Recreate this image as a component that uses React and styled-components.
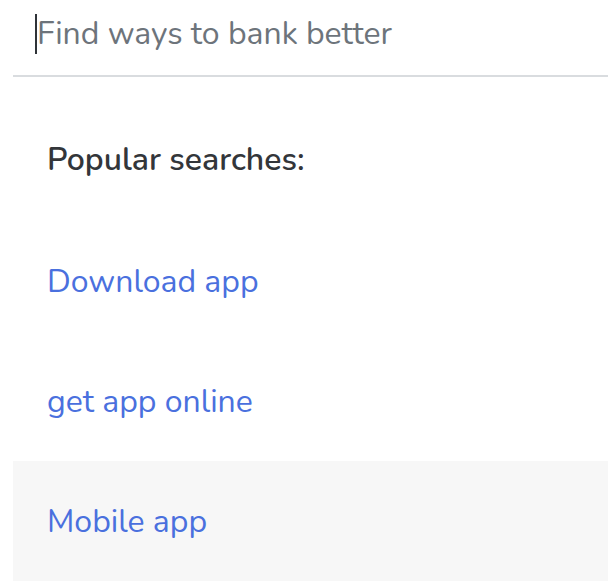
import React from "react";
import styled, { createGlobalStyle } from "styled-components";

const GlobalStyle = createGlobalStyle`
  html, body {
    margin: 0;
    padding: 0;
    background: #fff;
  }
  body {
    font-family: "Nunito", Lato, "Noto Sans", sans-serif;
  }
`;

const Panel = styled.div`
  width: 595px;
  margin-left: 13px;
  display: flex;
  flex-direction: column;
`;

const SearchBar = styled.div`
  height: 75px;
  display: flex;
  align-items: center;
  padding-left: 22px;
  border-bottom: 2px solid #d9dcdf;
`;

const Caret = styled.span`
  width: 2px;
  height: 40px;
  background: #2f3338;
  margin-top: -8px;
`;

const SearchInput = styled.input`
  flex: 1;
  border: none;
  outline: none;
  background: transparent;
  padding: 0 0 8px 0;
  font-family: inherit;
  font-size: 32px;
  color: #2f3338;
  &::placeholder {
    color: #6d747b;
  }
`;

const Heading = styled.div`
  height: 144px;
  box-sizing: border-box;
  display: flex;
  align-items: center;
  padding: 20px 0 0 34px;
  font-size: 32px;
  font-weight: 600;
  color: #33363a;
`;

const Item = styled.a`
  height: 120px;
  display: flex;
  align-items: center;
  padding-left: 34px;
  font-size: 32px;
  color: #4a70de;
  text-decoration: none;
  background: ${({ active }) => (active ? "#f7f7f7" : "transparent")};
`;

const items = ["Download app", "get app online", "Mobile app"];

export default function App() {
  return (
    <>
      <GlobalStyle />
      <Panel>
        <SearchBar>
          <Caret />
          <SearchInput placeholder="Find ways to bank better" />
        </SearchBar>
        <Heading>Popular searches:</Heading>
        {items.map((label, i) => (
          <Item key={label} href="#" active={i === 2 ? 1 : 0}>
            {label}
          </Item>
        ))}
      </Panel>
    </>
  );
}
